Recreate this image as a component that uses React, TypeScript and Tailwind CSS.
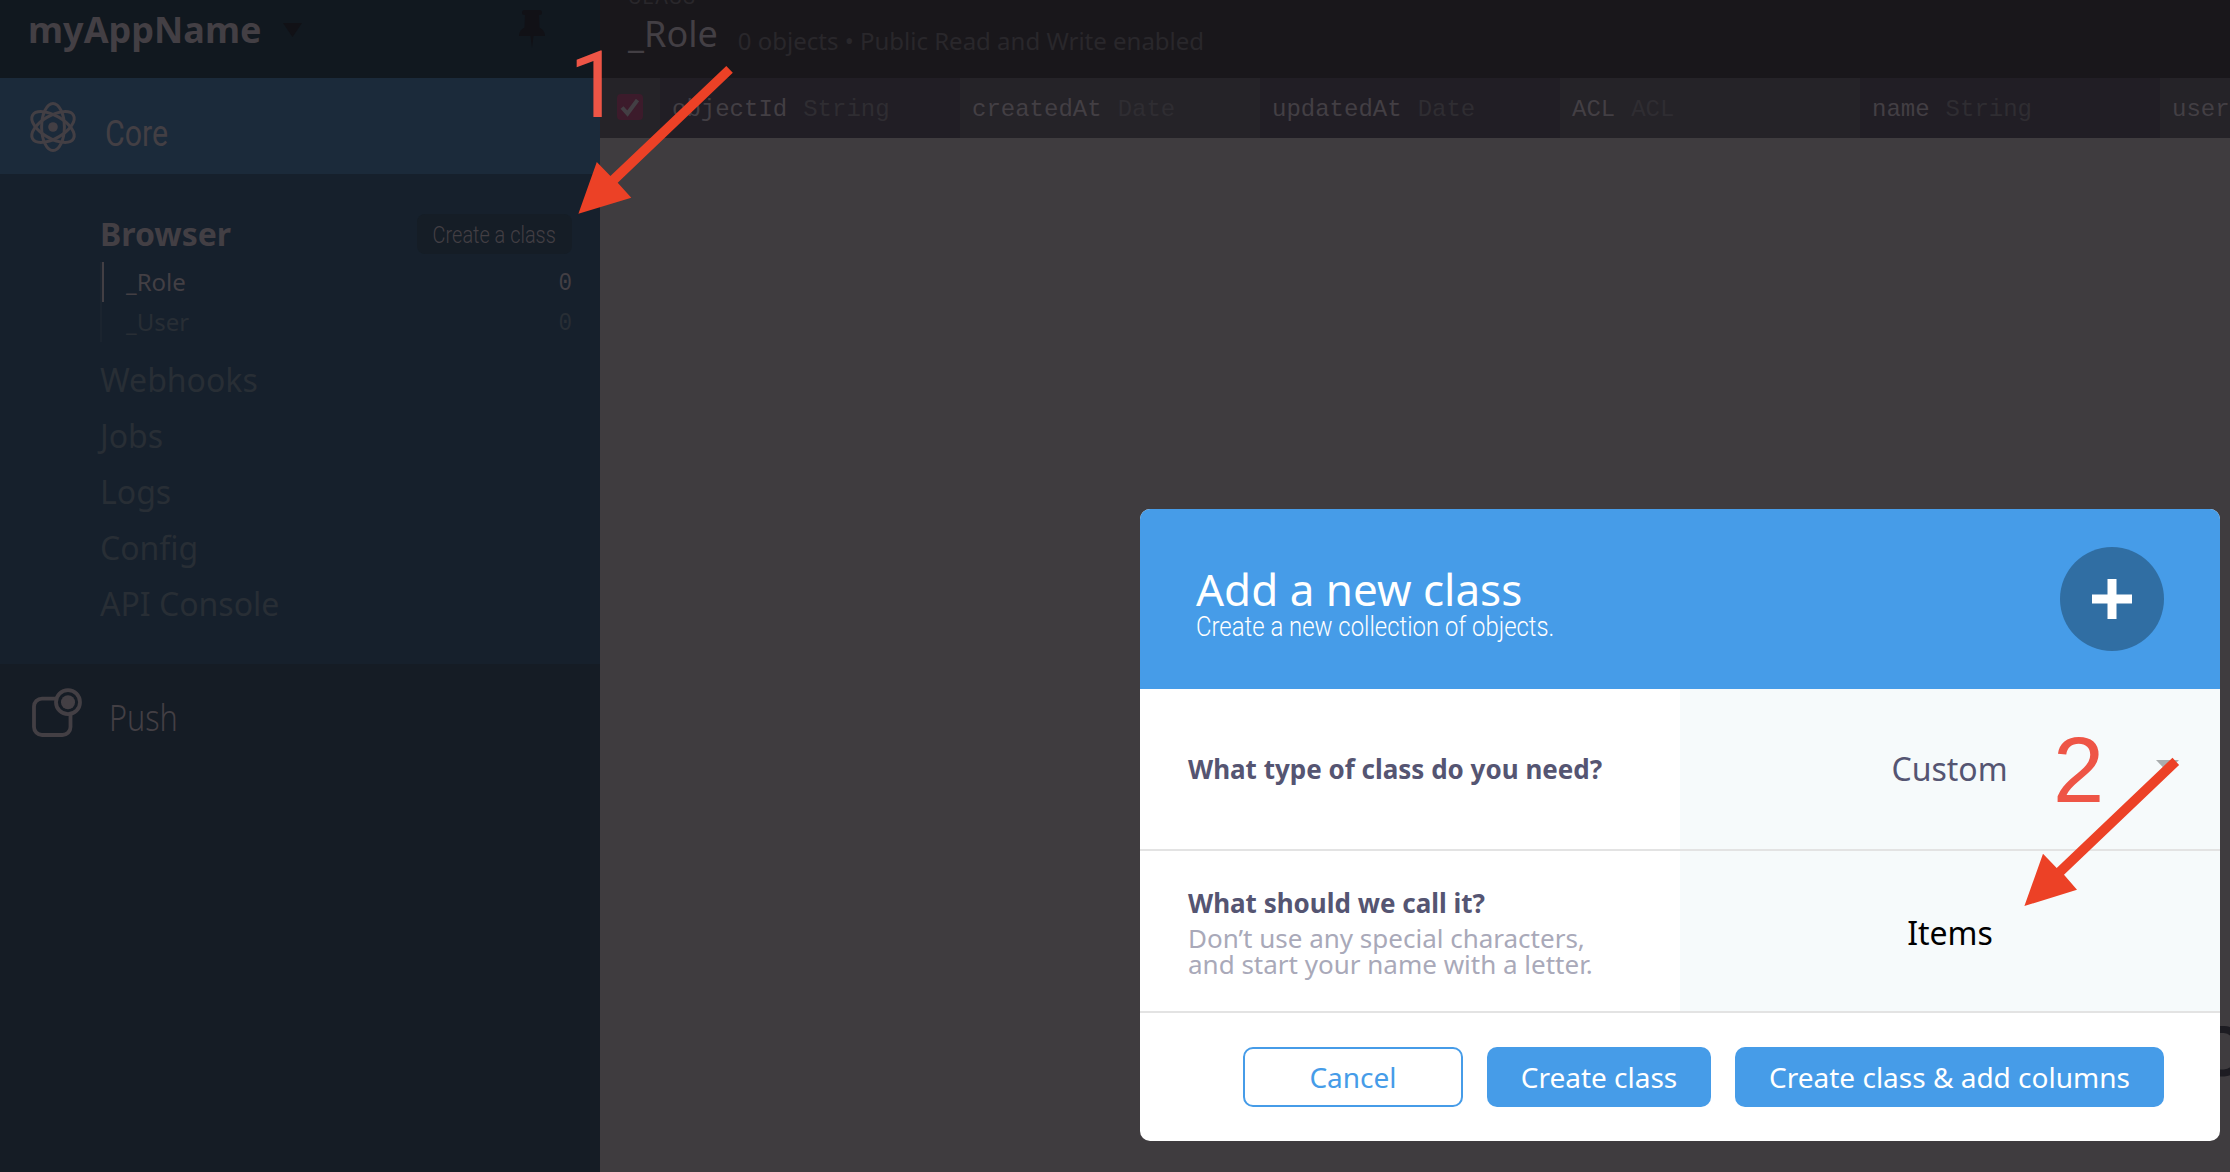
import React from "react";

const NOTO = "font-['Noto_Sans',sans-serif]";
const NARROW = "font-['Roboto',sans-serif]";

function AtomIcon() {
  return (
    <svg width="50" height="54" viewBox="-25 -27 50 54" fill="none" stroke="#433f44" strokeWidth="3">
      <ellipse rx="11.4" ry="23.6" />
      <ellipse rx="11.4" ry="23.6" transform="rotate(60)" />
      <ellipse rx="11.4" ry="23.6" transform="rotate(-60)" />
      <circle r="4.8" fill="#433f44" stroke="none" />
    </svg>
  );
}

function PushIcon() {
  return (
    <svg width="52" height="52" viewBox="0 0 52 52" fill="none" stroke="#433f44">
      <path d="M25 11.6H12a8 8 0 0 0-8 8V40a8 8 0 0 0 8 8h20.500a8 8 0 0 0 8-8V28" strokeWidth="3.8" />
      <circle cx="38" cy="15.200" r="12" strokeWidth="3.800" />
      <circle cx="38" cy="15.200" r="7" fill="#433f44" stroke="none" />
    </svg>
  );
}

function PinIcon() {
  return (
    <svg width="26" height="38" viewBox="0 0 26 38" fill="#111116">
      <path d="M5.500 0h15a2.500 2.500 0 0 1 0 5H20l.5 12.500c3 1.500 5.500 4.500 5.500 8.500H14.500l-1.500 12-1.500-12H0c0-4 2.500-7 5.500-8.500L6 5h-.5a2.500 2.500 0 0 1 0-5z" />
    </svg>
  );
}

function Sidebar() {
  return (
    <aside className="flex h-full w-[600px] shrink-0 flex-col bg-[#151c25]">
      <div className="flex h-[78px] shrink-0 items-start bg-[#11181f] pl-[28px]">
        <span className="mt-[6px] w-[255px] text-[36px] font-bold leading-[48px] text-[#433f44]">myAppName</span>
        <svg className="mt-[23px]" width="19" height="14" viewBox="0 0 19 14">
          <path d="M0 0H19L9.500 14Z" fill="#111116" />
        </svg>
        <div className="ml-auto mr-[55px] mt-[10px]">
          <PinIcon />
        </div>
      </div>
      <div className="flex h-[96px] shrink-0 items-start bg-[#1b2a3a] pl-[28px]">
        <div className="mt-[22px]">
          <AtomIcon />
        </div>
        <span className={NARROW + " ml-[27px] mt-[32px] origin-left scale-x-[0.82] text-[37px] leading-[48px] text-[#433f44]"}>Core</span>
      </div>
      <div className="flex h-[490px] shrink-0 flex-col bg-[#16202c] pl-[100px] pr-[28px] pt-[40px]">
        <div className="flex h-[40px] items-center justify-between">
          <span className="text-[32px] font-bold leading-[40px] text-[#433f44]">Browser</span>
          <span className="flex h-[40px] w-[155px] items-center justify-center rounded-[8px] bg-[#151d26] pt-[2px]">
            <span className={NARROW + " shrink-0 scale-x-[0.83] whitespace-nowrap text-[24px] font-light leading-[38px] text-[#433f44]"}>Create a class</span>
          </span>
        </div>
        <div className="mt-[8px] flex flex-col border-l-2 border-[#1b242f] text-[24px] leading-[40px]">
          <div className="flex h-[40px] justify-between border-l-2 border-[#433f44] pl-[22px] text-[#433f44]">
            <span>_Role</span>
            <span className="origin-right scale-x-[0.9] pt-[2px] font-['Liberation_Mono',monospace] text-[25px]">0</span>
          </div>
          <div className="flex h-[40px] justify-between pl-[24px] text-[#282e35]">
            <span>_User</span>
            <span className="origin-right scale-x-[0.9] pt-[2px] font-['Liberation_Mono',monospace] text-[25px]">0</span>
          </div>
        </div>
        <div className="mt-[10px] flex flex-col text-[32px] leading-[56px] text-[#282e35]">
          {["Webhooks", "Jobs", "Logs", "Config", "API Console"].map((t) => (
            <span key={t}>{t}</span>
          ))}
        </div>
      </div>
      <div className="flex items-start pl-[30px]">
        <div className="mt-[23px]">
          <PushIcon />
        </div>
        <span className="ml-[27px] mt-[30px] origin-left scale-x-[0.85] text-[36px] font-light leading-[48px] text-[#433f44]">Push</span>
      </div>
    </aside>
  );
}

const COLUMNS = [
  ["objectId", "String"],
  ["createdAt", "Date"],
  ["updatedAt", "Date"],
  ["ACL", "ACL"],
  ["name", "String"],
  ["users", ""],
];

function Browser() {
  return (
    <main className="flex h-full min-w-0 flex-1 flex-col bg-[#3f3c3f]">
      <div className="flex h-[78px] shrink-0 flex-col overflow-hidden bg-[#19171b] pl-[28px]">
        <span className={NARROW + " -mt-[15px] h-[24px] text-[20px] leading-[24px] tracking-[1.500px] text-[#29272b]"}>CLASS</span>
        <div className="flex items-start">
          <span className="text-[36px] leading-[50px] text-[#433f44]">_Role</span>
          <span className="ml-[20px] mt-[15px] text-[24px] leading-[33px] text-[#29272b]">0 objects • Public Read and Write enabled</span>
        </div>
      </div>
      <div className="flex h-[60px] shrink-0 overflow-hidden font-['Liberation_Mono',monospace] text-[24px] leading-[63px]">
        <div className="flex w-[60px] shrink-0 bg-[#252328] pl-[17px] pt-[16px]">
          <span className="flex size-[26px] items-center justify-center rounded-[4px] bg-[#3c1b2b]">
            <svg width="20" height="20" viewBox="0 0 20 20" fill="none" stroke="#433f44" strokeWidth="4">
              <path d="M2 10.500L7.500 16.500L17.500 3" />
            </svg>
          </span>
        </div>
        {COLUMNS.map(([name, type], i) => (
          <div key={i} className={"flex w-[300px] shrink-0 pl-[12px] " + (i % 2 ? "bg-[#252328]" : "bg-[#211e25]")}>
            <span className="text-[#433f44]">{name}</span>
            <span className="ml-[16px] text-[#2f2d32]">{type}</span>
          </div>
        ))}
      </div>
    </main>
  );
}

function Modal() {
  return (
    <section className="absolute left-[1140px] top-[509px] flex h-[632px] w-[1080px] flex-col overflow-hidden rounded-[10px] bg-white">
      <header className="flex h-[180px] items-start justify-between bg-[#469ce8] pl-[56px] pr-[56px] text-white">
        <div className="flex flex-col pt-[50px]">
          <span className="text-[44px] leading-[60px]">Add a new class</span>
          <span className={NARROW + " -mt-[8px] origin-left scale-x-[0.885] whitespace-nowrap text-[27px] font-light leading-[32px]"}>Create a new collection of objects.</span>
        </div>
        <span className="mt-[38px] flex size-[104px] items-center justify-center rounded-full bg-[#306ea3]">
          <svg width="40" height="40" viewBox="0 0 40 40">
            <path d="M15.500 0h9v15.500H40v9H24.500V40h-9V24.500H0v-9h15.500z" fill="#fff" />
          </svg>
        </span>
      </header>
      <div className="flex h-[162px] border-b-2 border-[#e3e3e3]">
        <div className="flex w-1/2 items-center pl-[48px]">
          <span className="text-[26px] font-bold leading-[36px] text-[#555572]">What type of class do you need?</span>
        </div>
        <div className="flex w-1/2 items-center bg-[#f6fafb] pl-[40px] pr-[41px]">
          <span className="flex-1 pl-[23px] text-center text-[32px] leading-[44px] text-[#555572]">Custom</span>
          <svg className="-mt-[6px]" width="23" height="12" viewBox="0 0 23 12">
            <path d="M0 0H23L11.500 12Z" fill="#a9adae" />
          </svg>
        </div>
      </div>
      <div className="flex h-[162px] border-b-2 border-[#e3e3e3]">
        <div className="flex w-1/2 flex-col pl-[48px] pt-[34px] text-[26px]">
          <span className="font-bold leading-[36px] text-[#555572]">What should we call it?</span>
          <span className="mt-[4px] leading-[26px] text-[#a9a9b9]">
            Don’t use any special characters,
            <br />
            and start your name with a letter.
          </span>
        </div>
        <div className="flex w-1/2 items-center justify-center bg-[#f6fafb] pt-[3px] text-[32px] leading-[44px] text-black">Items</div>
      </div>
      <footer className="flex items-start justify-end gap-[24px] pr-[56px] pt-[34px] text-[28px] leading-[56px]">
        <button className="h-[60px] w-[220px] rounded-[10px] border-2 border-[#469ce8] text-[#469ce8]">Cancel</button>
        <button className="h-[60px] w-[224px] rounded-[10px] bg-[#469ce8] text-white">Create class</button>
        <button className="h-[60px] w-[429px] rounded-[10px] bg-[#469ce8] text-white">Create class &amp; add columns</button>
      </footer>
    </section>
  );
}

function Annotations() {
  return (
    <>
      <svg className="absolute left-0 top-0" width="2230" height="1172" viewBox="0 0 2230 1172" fill="#ec4126">
        <path d="M726.300 66L732.800 72.700L617.700 182.700L631.300 197.700L578.400 213.700L596.800 162L610.400 176Z" />
        <path d="M2172.500 757.700L2179.100 765L2064 874.700L2077 889.700L2024.400 906L2043 853.700L2056.700 868Z" />
      </svg>
      <span className="absolute left-[569px] top-[36px] font-['Roboto',sans-serif] text-[92px] leading-[100px] text-[#ee5546]">1</span>
      <span className="absolute left-[2053px] top-[720px] font-['Liberation_Sans',sans-serif] text-[92px] leading-[100px] text-[#ee5546]">2</span>
    </>
  );
}

export default function App() {
  return (
    <div className={NOTO + " relative flex h-[1172px] w-[2230px] overflow-hidden"}>
      <Sidebar />
      <Browser />
      <svg className="absolute left-[2200px] top-[1026px]" width="30" height="52" viewBox="0 0 30 52" fill="none" stroke="#1d1c22" strokeWidth="7">
        <path d="M0 3.500H24Q34 4 36 14M0 47H24Q34 46 36 38" />
      </svg>
      <Modal />
      <Annotations />
    </div>
  );
}
